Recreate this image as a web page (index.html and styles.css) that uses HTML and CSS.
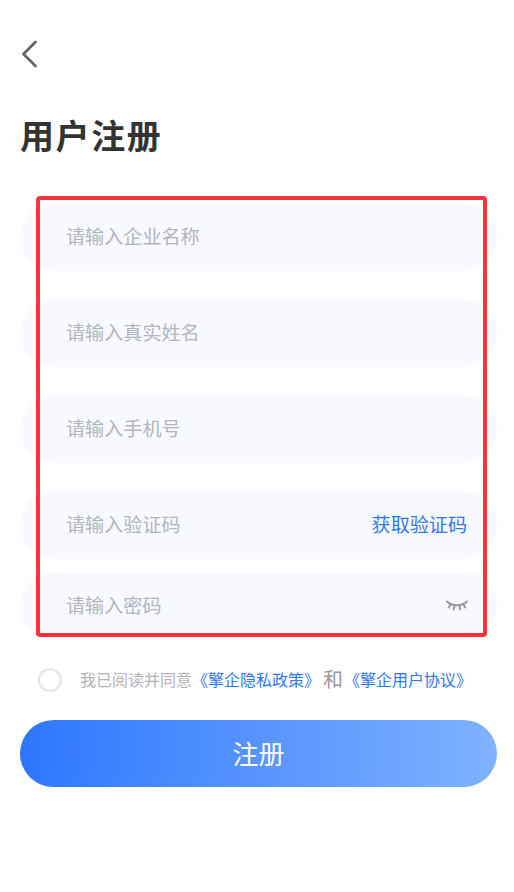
FILE: index.html
```html
<!DOCTYPE html>
<html>

<head>
    <meta charset="UTF-8">
    <title>用户注册</title>
    <link rel="stylesheet" href="styles.css">
</head>

<body>
    <div class="page">
        <!-- 返回 -->
        <a class="back" href="javascript:;">
            <svg width="18" height="30" viewBox="0 0 18 30">
                <path d="M15.5 3 L3.5 15 L15.5 27" fill="none" stroke="#666" stroke-width="2.8" stroke-linecap="round" stroke-linejoin="round" />
            </svg>
        </a>

        <h1 class="title">用户注册</h1>

        <!-- 表单 -->
        <div class="form">
            <div class="field"><span class="hint">请输入企业名称</span></div>
            <div class="field"><span class="hint">请输入真实姓名</span></div>
            <div class="field"><span class="hint">请输入手机号</span></div>
            <div class="field">
                <span class="hint">请输入验证码</span>
                <a class="code" href="javascript:;">获取验证码</a>
            </div>
            <div class="field field-last">
                <span class="hint">请输入密码</span>
                <svg class="eye" width="22" height="14" viewBox="0 0 22 14">
                    <path d="M1 2.5 C6 7.5 16 7.5 21 2.5 M4.5 5.5 L2.8 8.5 M8.5 6.8 L7.8 10.5 M13.5 6.8 L14.2 10.5 M17.5 5.5 L19.2 8.5" fill="none" stroke="#999" stroke-width="1.9" stroke-linecap="round" />
                </svg>
            </div>
            <!-- 红色标注框 -->
            <div class="mark"></div>
        </div>

        <!-- 协议 -->
        <div class="agree">
            <span class="check"></span>
            <span class="agree-text">我已阅读并同意</span>
            <a class="link" href="javascript:;">《擎企隐私政策》</a>
            <span class="and">和</span>
            <a class="link" href="javascript:;">《擎企用户协议》</a>
        </div>

        <a class="submit" href="javascript:;">注册</a>
    </div>
</body>

</html>
```

FILE: styles.css
```css
* {
    margin: 0;
    padding: 0;
    box-sizing: border-box;
}

body {
    background-color: #fff;
    font-family: "Noto Sans CJK SC", "Noto Sans", sans-serif;
}

a {
    text-decoration: none;
}

.page {
    width: 514px;
    height: 892px;
    padding: 39px 17px 0 20px;
    overflow: hidden;
}

.back {
    display: block;
    height: 30px;
}

.title {
    margin-top: 46px;
    height: 42px;
    line-height: 40px;
    font-size: 34px;
    font-weight: 700;
    letter-spacing: 1.6px;
    color: #333;
}

.form {
    position: relative;
    margin-top: 46px;
}

.field {
    display: flex;
    align-items: center;
    justify-content: space-between;
    height: 68px;
    margin-bottom: 28px;
    padding: 0 30px 2px 46px;
    border-radius: 34px;
    background-color: #f8f9fe;
}

.field:nth-child(4) {
    margin-bottom: 13px;
}

.field-last {
    margin-bottom: 0;
}

.hint {
    font-size: 19.1px;
    color: #b2b4be;
}

.code {
    font-size: 19.1px;
    color: #2f78f5;
}

.eye {
    margin-top: 2px;
    margin-right: -1px;
}

/* 盖在表单上的标注框 */
.mark {
    position: absolute;
    left: 16px;
    top: -7px;
    width: 451px;
    height: 441px;
    border: 4px solid #fb3338;
    border-radius: 4px;
}

.agree {
    display: flex;
    align-items: center;
    height: 24px;
    margin-top: 28px;
    padding-left: 18px;
}

.check {
    flex: none;
    width: 24px;
    height: 24px;
    margin-right: 18px;
    border: 2px solid #e3e5ed;
    border-radius: 50%;
}

.agree-text {
    font-size: 16px;
    line-height: 20px;
    margin-bottom: 3px;
    color: #b2b3bb;
}

.link {
    font-size: 16px;
    line-height: 20px;
    margin-bottom: 3px;
    color: #2f78f5;
}

.and {
    margin: 0 1px 3px 3px;
    line-height: 20px;
    font-size: 20px;
    color: #999;
}

.submit {
    display: block;
    width: 477px;
    height: 67px;
    margin-top: 28px;
    line-height: 66px;
    text-align: center;
    font-size: 26px;
    color: #fff;
    border-radius: 34px;
    background: linear-gradient(95deg, #2d76ff, #80b2ff);
}
```
